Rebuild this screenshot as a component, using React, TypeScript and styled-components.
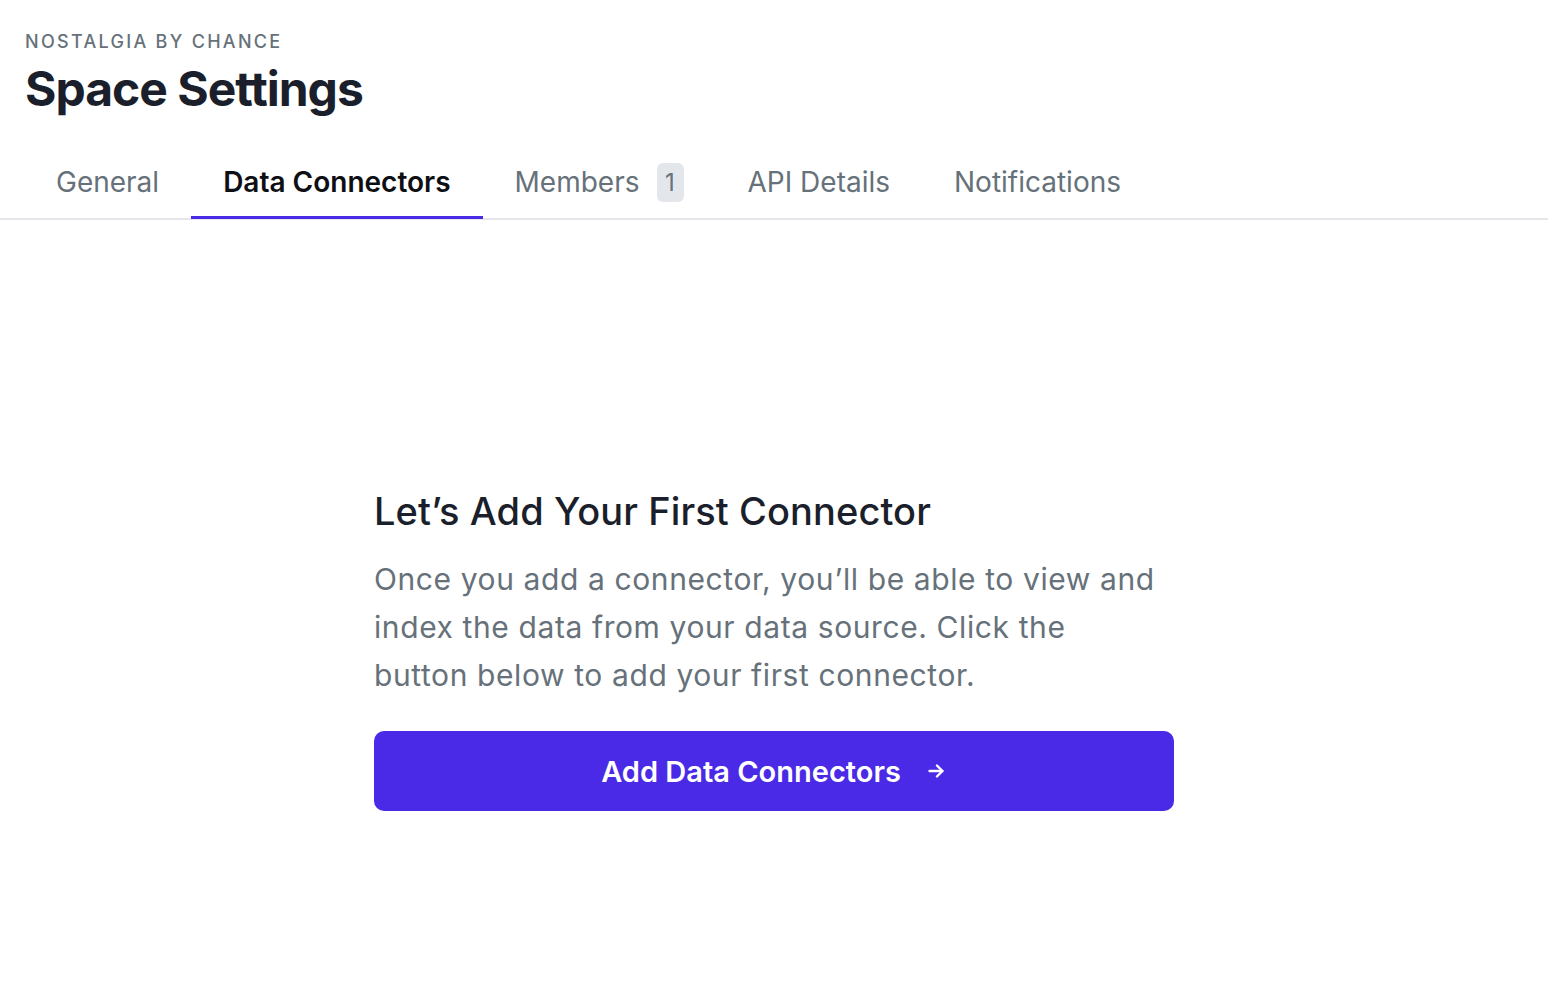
import React from "react";
import styled, { createGlobalStyle } from "styled-components";

const Global = createGlobalStyle`
  html, body { margin: 0; padding: 0; background: #ffffff; }
  body { font-family: Inter, "Noto Sans", sans-serif; -webkit-font-smoothing: antialiased; }
  * { box-sizing: border-box; }
`;

const Page = styled.div`
  min-height: 990px;
  display: flex;
  flex-direction: column;
`;

const Header = styled.header`
  padding: 30px 25px 0;
  display: flex;
  flex-direction: column;
`;

const Eyebrow = styled.div`
  font-size: 18px;
  font-weight: 500;
  letter-spacing: 2.3px;
  color: #66717a;
  line-height: 24px;
  text-transform: uppercase;
`;

const Title = styled.h1`
  margin: 5px 0 0;
  font-size: 48px;
  font-weight: 700;
  color: #1b1f2b;
  line-height: 60px;
  letter-spacing: -1px;
`;

const TabBar = styled.nav`
  margin-top: 32px;
  display: flex;
  padding: 0 24px;
  border-bottom: 2px solid #e4e6e9;
`;

const Tab = styled.div<{ $active?: boolean }>`
  display: flex;
  align-items: center;
  gap: 17px;
  padding: 0 32px 3px;
  height: 68px;
  font-size: 28px;
  font-weight: ${(p) => (p.$active ? 600 : 400)};
  color: ${(p) => (p.$active ? "#0d0f14" : "#66717a")};
  border-bottom: 3px solid ${(p) => (p.$active ? "#4a2ae6" : "transparent")};
  margin-bottom: -1px;
`;

const Badge = styled.span`
  display: inline-flex;
  align-items: center;
  justify-content: center;
  width: 27px;
  height: 39px;
  border-radius: 6px;
  background: #e3e6ea;
  color: #66717a;
  font-size: 24px;
`;

const Main = styled.main`
  flex: 1;
  display: flex;
  justify-content: center;
  padding-top: 267px;
`;

const Empty = styled.section`
  width: 800px;
  display: flex;
  flex-direction: column;
`;

const EmptyTitle = styled.h2`
  margin: 0;
  font-size: 38px;
  font-weight: 500;
  color: #1b1f2b;
  line-height: 48px;
  letter-spacing: 0.1px;
`;

const EmptyText = styled.p`
  margin: 20px 0 0;
  max-width: 786px;
  font-size: 30px;
  line-height: 48px;
  color: #66717a;
  font-weight: 400;
  letter-spacing: 0.6px;
`;

const PrimaryButton = styled.button`
  margin-top: 32px;
  height: 80px;
  width: 100%;
  border: none;
  border-radius: 10px;
  background: #4a2ae6;
  color: #ffffff;
  font-family: inherit;
  font-size: 29px;
  font-weight: 600;
  display: flex;
  align-items: center;
  justify-content: center;
  gap: 24px;
  cursor: pointer;
`;

const ArrowIcon = () => (
  <svg width="22" height="22" viewBox="0 0 24 24" fill="none" stroke="#fff" strokeWidth="2.6" strokeLinecap="round" strokeLinejoin="round">
    <path d="M5 12h14" />
    <path d="M13 6l6 6-6 6" />
  </svg>
);

export default function App() {
  return (
    <Page>
      <Global />
      <Header>
        <Eyebrow>Nostalgia by Chance</Eyebrow>
        <Title>Space Settings</Title>
      </Header>
      <TabBar>
        <Tab>General</Tab>
        <Tab $active>Data Connectors</Tab>
        <Tab>
          Members <Badge>1</Badge>
        </Tab>
        <Tab>API Details</Tab>
        <Tab>Notifications</Tab>
      </TabBar>
      <Main>
        <Empty>
          <EmptyTitle>Let’s Add Your First Connector</EmptyTitle>
          <EmptyText>
            Once you add a connector, you’ll be able to view and index the data from your data source. Click the button below to add your first connector.
          </EmptyText>
          <PrimaryButton>
            Add Data Connectors <ArrowIcon />
          </PrimaryButton>
        </Empty>
      </Main>
    </Page>
  );
}
